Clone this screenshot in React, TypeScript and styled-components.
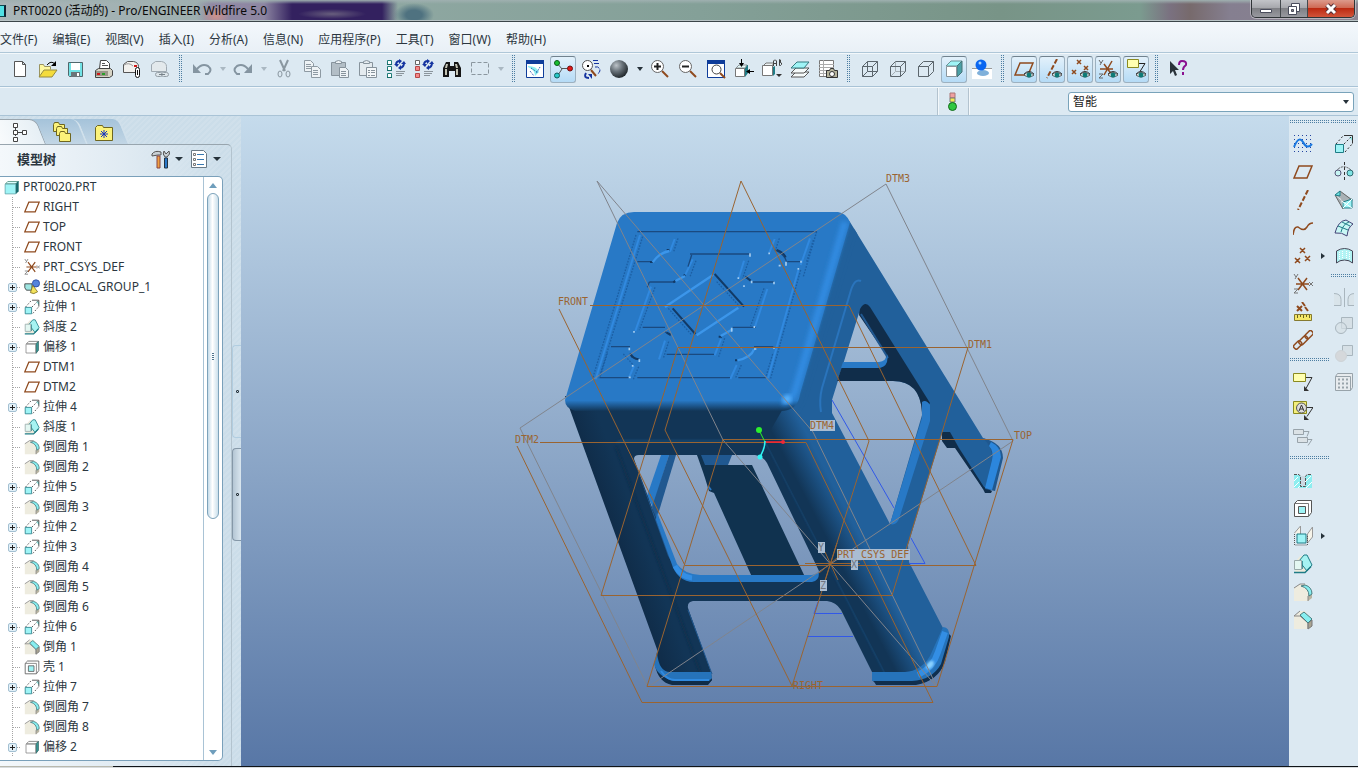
import React from 'react';
import styled, { createGlobalStyle, css } from 'styled-components';

const uiFont = '"Noto Sans", "Noto Sans CJK SC", sans-serif';

const GlobalStyle = createGlobalStyle`
  *, *::before, *::after { box-sizing: border-box; }
  body { margin: 0; background: #dbe8f1; font: 12px/20px ${uiFont}; color: #2b3640; }
  button { font: inherit; color: inherit; padding: 0; margin: 0; border: 0; background: none; }
  ul { list-style: none; margin: 0; padding: 0; }
`;

/* ---------- drawings ---------- */

const BROWN = '#8f4a1e';
const TEAL = '#1f7c86';
const AQUA = '#9ff4f6';

const eye = (
  <g>
    <path d="M10 16q4-5 10 0q-5 4-10 0z" fill="#fff" stroke="#555" />
    <circle cx="15" cy="16" r="2.5" fill="#0f7a78" />
    <path d="M10 15q5-5 10 0" fill="none" stroke="#333" />
  </g>
);

const cubeLines = 'M2.5 7.5h10v10h-10zM7.5 2.5h10v10M2.5 7.5l5-5M12.5 7.5l5-5M12.5 17.5l5-5';

const art: Record<string, React.ReactNode> = {
  new: <path d="M4.500 2.500h8l3 3v12h-11z M12.500 2.500v3h3" fill="#fff" stroke="#555" />,
  open: (
    <g>
      <path d="M1.500 17.500v-12h4l1 2h6v3" fill="#fdf8a0" stroke="#9a9460" />
      <path d="M1 18l5-7h13l-5 7z" fill="#f4dc3c" stroke="#958a40" />
      <path d="M9 6q4-5 8-1" fill="none" stroke="#000" />
      <path d="M18 2v5h-5z" fill="#000" />
    </g>
  ),
  save: (
    <g>
      <path d="M2.500 3.500h14v14h-13l-1-1z" fill="#72e3e6" stroke="#50676c" />
      <path d="M5 4h9v7H5z" fill="#fff" />
      <path d="M5 13h9v5H5z" fill="#6b7478" />
      <path d="M11 14h2v3h-2z" fill="#fff" />
    </g>
  ),
  print: (
    <g>
      <path d="M5.500 9.500l1-8h6l3 3v5z" fill="#fff" stroke="#444" />
      <path d="M8 4.500h3M8 6.500h6" stroke="#555" />
      <path d="M1.500 11.500l3-2h12l2 2v5l-3 2h-14z" fill="#d6d3c4" stroke="#444" />
      <path d="M2 12h12v5H2z" fill="#9a9788" />
      <path d="M3 14h3v2H3z" fill="#d01818" />
      <path d="M8 14h3v2H8z" fill="#28a028" />
    </g>
  ),
  mail: (
    <g>
      <path d="M1.500 13.500v-8l4-3h6q5 1 5 5v6z" fill="#f2f1ee" stroke="#555" />
      <path d="M2 6q5-3 9 1" fill="none" stroke="#999" />
      <path d="M12 6h3v2h-3z" fill="#d01818" />
      <rect x="13.500" y="8.500" width="4" height="10" rx="2" fill="#fff" stroke="#111" />
      <path d="M15.500 11v5" stroke="#111" />
    </g>
  ),
  maillink: (
    <g opacity=".9">
      <path d="M1.500 12.500v-7l4-3h6q5 1 5 5v5z" fill="#e4e9ec" stroke="#99a3aa" />
      <rect x="5.500" y="13.500" width="7" height="4" rx="2" fill="#dde5ea" stroke="#8d979e" />
      <rect x="11.500" y="13.500" width="7" height="4" rx="2" fill="#dde5ea" stroke="#8d979e" />
      <path d="M9 15.500h6" stroke="#6d777e" />
    </g>
  ),
  undo: <g fill="none" stroke="#8595a1" strokeWidth="2"><path d="M5 10q5-6 11-3q5 4 0 8h-3" /><path d="M1 5v9h8z" fill="#8595a1" stroke="none" /></g>,
  redo: <g fill="none" stroke="#8595a1" strokeWidth="2"><path d="M15 10q-5-6-11-3q-5 4 0 8h3" /><path d="M19 5v9h-8z" fill="#8595a1" stroke="none" /></g>,
  cut: (
    <g fill="none" stroke="#8a97a0" strokeWidth="2">
      <path d="M6 1l5 11M14 1L9 12" />
      <ellipse cx="6" cy="15" rx="2" ry="3" strokeWidth="1" />
      <ellipse cx="14" cy="15" rx="2" ry="3" strokeWidth="1" />
    </g>
  ),
  copy: (
    <g fill="#eef3f6" stroke="#8e9aa3">
      <path d="M2.500 1.500h6l3 3v8h-9z M4 5.500h5M4 7.500h5M4 9.500h5" />
      <path d="M9.500 7.500h6l3 3v8h-9z M11 11.500h5M11 13.500h5M11 15.500h5" />
    </g>
  ),
  paste: (
    <g fill="#b3bec6" stroke="#87939c">
      <path d="M1.500 3.500h14v13h-14z" /><path d="M5.500 4.500v-2l3-1l3 1v2z" fill="#eef3f6" />
      <path d="M9.500 8.500h6l3 3v7h-9z M11 12.500h5M11 14.500h5M11 16.500h5" fill="#eef3f6" />
    </g>
  ),
  pastex: (
    <g fill="#e4ebef" stroke="#87939c">
      <path d="M1.500 3.500h13v13h-13z" /><path d="M5.500 4.500v-2l3-1l3 1v2z" />
      <path d="M8.500 8.500h10v10h-10z M10 11.500h2M13 11.500h4M10 13.500h2M13 13.500h4M10 16.500h2M13 16.500h4" fill="#f3f7f9" />
    </g>
  ),
  regen: (
    <g>
      <path d="M1.500 1.500h4v4h-4zM1.500 7.500h4v4h-4zM1.500 14.500h4v4h-4z" fill="#fff" stroke="#1f7c78" />
      <path d="M1 5h5v1H1zM1 11h5v1H1zM1 18h5v1H1z" fill="#156c68" />
      <path d="M10 6q0-4 4-4M18 4q0 4-4 5" fill="none" stroke="#1534a0" strokeWidth="2" />
      <path d="M13 0v5l3-3zM15 6v5l-3-2zM8 5h5l-2 3zM15 5h5l-2-3z" fill="#1534a0" />
      <path d="M10 12.500h9M10 14.500h8M10 16.500h6" stroke="#8b959c" />
    </g>
  ),
  regenred: (
    <g>
      <path d="M1.500 1.500h4v4h-4z" fill="#fff" stroke="#666" />
      <path d="M1.500 7.500h4v4h-4zM1.500 14.500h4v4h-4z" fill="#f48888" stroke="#b84848" />
      <path d="M10 6q0-4 4-4M18 4q0 4-4 5" fill="none" stroke="#1534a0" strokeWidth="2" />
      <path d="M13 0v5l3-3zM15 6v5l-3-2zM8 5h5l-2 3zM15 5h5l-2-3z" fill="#1534a0" />
      <path d="M10 12.500h9M10 14.500h8M10 16.500h6" stroke="#8b959c" />
    </g>
  ),
  find: (
    <g>
      <path d="M4 3h4v4h4V3h4l3 6v9h-6v-6H7v6H1V9z" fill="#151515" />
      <path d="M4 5h2l-1 4H3zM13 5h2l1 4h-2zM3 10h2v6H3zM14 10h2v6h-2z" fill="#c4c4b4" />
    </g>
  ),
  marquee: <path d="M1.500 3.500h17v12h-17z" fill="none" stroke="#8b979f" strokeDasharray="4 2" />,
  repaint: (
    <g>
      <path d="M1.500 2.500h17v16h-17z" fill="#fff" stroke="#0f3d9a" /><path d="M1 1h18v4H1z" fill="#0f3d9a" />
      <path d="M3 7q9 0 11 6l-4 4q0-6-7-9z" fill="#8ff0f0" />
      <path d="M6 9l6 4M5 12l4 5M15 8l-4 7" stroke="#1446a8" strokeDasharray="1 1" />
    </g>
  ),
  axis3: (
    <g>
      <path d="M4 4l5 6l-4 6M9 9.500h9" fill="none" stroke="#555" />
      <circle cx="4" cy="4" r="2.500" fill="#18c030" stroke="#0b5a16" />
      <circle cx="17" cy="9.500" r="2.500" fill="#e01818" stroke="#701010" />
      <circle cx="4" cy="16.500" r="2.500" fill="#28c8c8" stroke="#0e5c5c" />
    </g>
  ),
  orient: (
    <g>
      <path d="M10 11l5 6" stroke={BROWN} strokeWidth="2" />
      <circle cx="6.500" cy="6.500" r="5" fill="#fff" stroke="#555" />
      <path d="M6 6h2v2H6z" />
      <path d="M12 1.500h6M13 4.500h5M14 8q4-1 5 3q0 3-3 4" fill="none" stroke="#1534a0" strokeDasharray="5 1" />
      <path d="M5 14q-3 5 3 5" fill="none" stroke="#1534a0" strokeWidth="2" />
      <path d="M7 15h4v5z" fill="#1534a0" />
    </g>
  ),
  ball: <circle cx="10" cy="10" r="9" fill="url(#sphere)" />,
  zoomin: (
    <g>
      <path d="M12 12l6 6" stroke={BROWN} strokeWidth="2" />
      <circle cx="7.500" cy="7.500" r="6" fill="#fff" stroke="#666" /><path d="M4 7.500h7M7.500 4v7" stroke="#222" strokeWidth="2" />
    </g>
  ),
  zoomout: (
    <g>
      <path d="M12 12l6 6" stroke={BROWN} strokeWidth="2" />
      <circle cx="7.500" cy="7.500" r="6" fill="#fff" stroke="#666" /><path d="M4 7.500h7" stroke="#222" strokeWidth="2" />
    </g>
  ),
  refit: (
    <g>
      <path d="M1.500 2.500h17v16h-17z" fill="#fff" stroke="#0f3d9a" /><path d="M1 1h18v4H1z" fill="#0f3d9a" />
      <path d="M14 14l5 5" stroke={BROWN} strokeWidth="2" /><circle cx="10.500" cy="10.500" r="4.500" fill="#fff" stroke="#444" />
    </g>
  ),
  reorient: (
    <g>
      <path d="M2 9l3-3h9v8l-3 4z" fill={TEAL} /><path d="M2 9l3-3h8l-2 3z" fill="#e7fbfb" stroke="#8a9498" /><path d="M1.500 9.500h9v8h-9z" fill="#fff" stroke="#777" />
      <path d="M7.500 0v5M20 12.500h-5" stroke="#000" /><path d="M5 4h5L7.500 8zM16 10v5l-4-2.500z" fill="#000" />
    </g>
  ),
  views: (
    <g>
      <path d="M1 7l3-3h8l-2 3z" fill="#eef4f5" stroke="#777" /><path d="M11 8l2-1v8l-2 2z" fill={TEAL} />
      <path d="M.5 6.500h10v10H.5z" fill="#fff" stroke="#777" />
      <path d="M11.500 7V2l1-1h1l1 1v5M12 4.500h2M17.500 .500v6h1l1-1V4l-1-.500h-1h1V1l-1-.500z" fill="none" stroke="#444" /><path d="M14 15h6l-3 3z" fill="#333" />
    </g>
  ),
  layers: (
    <g fill="#f5fafa" stroke="#555">
      <path d="M1 18l5-5h13l-5 5z" /><path d="M1 14l5-5h13l-5 5z" /><path d="M1 9l6-6h12l-5 6z" fill={AQUA} stroke="#357a80" />
    </g>
  ),
  viewmgr: (
    <g>
      <path d="M1.500 1.500h14v16h-14z" fill="#fff" stroke="#777" />
      <path d="M1 5.500h15M1 8.500h15M1 11.500h15M1 14.500h15M5.500 1v16" stroke="#aaa" />
      <path d="M8.500 11.500h3l1-2h3l1 2h3v7h-11z" fill="#b5b39b" stroke="#333" /><circle cx="14" cy="15" r="2.500" fill="#fff" stroke="#333" />
    </g>
  ),
  wire: <path d={cubeLines + 'M7.5 2.5v10h10M2.5 17.5l5-5'} fill="none" stroke="#5c666d" />,
  hidden: <g fill="none" stroke="#5c666d"><path d="M7.500 3v9.500h9.500M3 17l4-4" stroke="#a5afb5" /><path d={cubeLines} /></g>,
  nohidden: <path d={cubeLines} fill="none" stroke="#5c666d" />,
  shaded: (
    <g>
      <path d="M2 7l5-5h11l-5 5z" fill={AQUA} stroke="#6a9397" /><path d="M13 7l5-5v11l-5 5z" fill="#4aa0a6" stroke="#497377" />
      <path d="M2.500 7.500h10v10h-10z" fill="#fff" stroke="#8b969c" />
    </g>
  ),
  realism: (
    <g>
      <path d="M0 9h20v11H0z" fill="#fff" /><path d="M0 9.500h20" stroke="#999" />
      <ellipse cx="11" cy="14" rx="6" ry="3" fill="#7fb0da" /><circle cx="9" cy="6" r="5.500" fill="#0a66f0" /><circle cx="8" cy="4" r="1.500" fill="#a8d4ff" />
    </g>
  ),
  dplane: <g><path d="M1 16l5-12h13l-5 12z" fill="none" stroke={BROWN} strokeWidth="1.500" />{eye}</g>,
  daxis: <g><path d="M15 0L5 19" stroke={BROWN} strokeWidth="2" strokeDasharray="5 2" />{eye}</g>,
  dpoint: <g><path d="M7 1l4 4M11 1l-4 4M2 11l4 4M6 11l-4 4M14 7l4 4M18 7l-4 4" stroke={BROWN} strokeWidth="1.500" />{eye}</g>,
  dcsys: <g><path d="M2 10h13M6 5l8 11M14 2L6 16" stroke={BROWN} strokeWidth="1.500" /><path d="M1 1l2 3M5 1L2 6M1 15h4l-4 4h4" fill="none" stroke="#666" />{eye}</g>,
  dnote: <g><path d="M1.500 .500h11v8h-11z" fill="#ffffb0" stroke="#8a8a20" /><path d="M13 4.500h6l-5 8" fill="none" stroke="#222" />{eye}</g>,
  help: (
    <g>
      <path d="M2 2v13l3-3l2 5l2-1l-2-5h4z" fill="#2a333a" />
      <path d="M11 6q0-4 3-4q5 0 4 4q-3 2-3 5M15 13v3" fill="none" stroke="#8a1090" strokeWidth="2" />
    </g>
  ),
  light: (
    <g>
      <path d="M8 1h5v5H8z" fill="#f0a0a0" stroke="#a77" /><path d="M8 6h5v4H8z" fill="#f5ec50" stroke="#777" />
      <circle cx="10.500" cy="14.500" r="4" fill="#30c840" stroke="#146a1c" />
    </g>
  ),
  /* feature toolbars */
  sketch: (
    <g>
      <path d="M1 1.500h19M1 5.500h19M1 9.500h19M1 13.500h19M1 17.500h19" stroke="#2344a0" strokeDasharray="1 3" />
      <path d="M1 13q5-12 9-5q4 8 9 2" fill="none" stroke="#1878e0" strokeWidth="2" />
    </g>
  ),
  plane: <path d="M1 16l5-12h13l-5 12z" fill="none" stroke={BROWN} strokeWidth="1.500" />,
  axis: <path d="M15 0L5 20" stroke={BROWN} strokeWidth="2" strokeDasharray="5 2" />,
  curve: <path d="M0 17q1-9 5-8q6 5 9 0q2-4 6-4" fill="none" stroke={BROWN} strokeWidth="1.500" />,
  points: <path d="M7 2l5 5M12 2L7 7M2 12l5 5M7 12l-5 5M12 10l5 5M17 10l-5 5" stroke={BROWN} strokeWidth="1.500" />,
  csys: <g><path d="M3 10h13M5 4l9 12M14 4L5 16" stroke={BROWN} strokeWidth="1.500" /><path d="M1 0l2 3M5 0L2 5M1 15h4l-4 4h4M16 8l4 4M20 8l-4 4" fill="none" stroke="#777" /></g>,
  analysis: (
    <g>
      <path d="M4 4l5 5M9 4L4 9M9 0l3 4M12 5l3 4" stroke={BROWN} strokeWidth="2" />
      <path d="M1.500 12.500h17v6h-17z" fill="#f5e868" stroke="#857a30" /><path d="M4.500 13v3M7.500 13v2M10.500 13v3M13.500 13v2M16.500 13v3" stroke="#6b6220" />
    </g>
  ),
  chain: (
    <g fill="none" stroke={BROWN} strokeWidth="1.500">
      <rect x="0" y="13" width="9" height="5" rx="2" transform="rotate(-45 4 15)" />
      <rect x="5" y="8" width="10" height="5" rx="2" transform="rotate(-45 10 10)" />
      <rect x="11" y="2" width="9" height="5" rx="2" transform="rotate(-45 16 4)" />
    </g>
  ),
  note: <g><path d="M.5 1.500h12v8H.5z" fill="#ffffb0" stroke="#8a8a20" /><path d="M13 5.500h6l-6 11" fill="none" stroke="#333" /><path d="M11 14v5h5z" fill="#333" /></g>,
  annot: <g><path d="M.5 1.500h13v12H.5z" fill="#f3ee7c" stroke="#8a8a20" /><circle cx="8.500" cy="8" r="5" fill="#ddd" stroke="#555" /><path d="M6 11l2.500-6L11 11M7 9h3M14 7.500h6l-6 9" fill="none" stroke="#333" /><path d="M11 15v5h5z" fill="#333" /></g>,
  annot2: <g fill="#dbe2e6" stroke="#98a3aa"><path d="M.5 1.500h10v5H.5zM4.500 9.500h10v5h-10z" /><path d="M11 3.500h5l-2 5M15 11.500h4l-4 6" fill="none" /></g>,
  hole: <g><path d="M1 5h5l2 2v9h4V7l2-2h5v13H1z" fill="#8deef0" /><path d="M1 17l5-5M5 18l3-3M13 18l6-6M12 12l6-6M1 11l4-4" stroke="#fff" /><path d="M8 6h4v10H8z" fill="#cdd9e2" /><path d="M1 4.500h5l1.500 2v10h5v-10l1.500-2h4" fill="none" stroke="#555" strokeDasharray="3 1" /></g>,
  shell: <g><path d="M1.500 5.500l3-3h14v12l-3 4h-14z" fill="#fff" stroke="#555" /><path d="M1.500 5.500h14v13" fill="none" stroke="#777" /><path d="M5.500 8.500h7v7h-7z" fill={AQUA} stroke="#555" /></g>,
  rib: <g><path d="M1.500 7l6-7v9M14.500 8l5-7v10l-5 6z" fill="#f6f4ea" stroke="#999" /><path d="M4 8h9v9H4z" fill={AQUA} stroke={TEAL} /><path d="M1.500 8v11h13V9" fill="none" stroke="#555" strokeDasharray="1 1" /></g>,
  draft: <g><path d="M2 8l5-6h5l6 11-5 5H2z" fill="#eceadc" /><path d="M6 7l5-6h3l5 10l-5 6z" fill="#a6f3f2" stroke={TEAL} /><path d="M1 18.500h11l6-6M9 7v8" fill="none" stroke={TEAL} strokeWidth="1.500" /><path d="M1.500 6.500h7v9h-7z" fill="#e3f7f2" stroke="#9aa" /></g>,
  round: <g><path d="M1 6l6-4h6l6 8v6l-4 3H1z" fill="#eeecdf" /><path d="M15 19v-6l4-3v6z" fill="#b8b4a2" /><path d="M1 6l6-4h5" fill="none" stroke="#888" /><path d="M8 4l4-1q7 2 7 9l-3 2q0-8-8-10z" fill="#86eef0" stroke="#4a7c80" /><path d="M15 14v5" stroke="#888" /></g>,
  chamfer: <g><path d="M1 6l6-5h5l7 9v6l-4 3H1z" fill="#eeecdf" /><path d="M15 19v-6l4-3v6z" fill="#a9a491" stroke="#777" /><path d="M1 6l6-5M1 6h6l8 7v6" fill="none" stroke="#888" /><path d="M7 5l4-3l8 7l-4 4z" fill="#86eef0" stroke="#4a7c80" /></g>,
  extrude: <g><path d="M15 3h4v5z" fill="#8fe5e0" /><path d="M2 10l7-8M10 10l8-8M11 18l8-9" stroke="#333" strokeDasharray="2 2" /><path d="M10 1.500h8.500v8" fill="none" stroke="#333" /><path d="M1.500 10.500h8v8h-8z" fill={AQUA} stroke={TEAL} /></g>,
  revolve: <g><path d="M10.500 0v20" stroke="#333" strokeDasharray="3 2" /><path d="M2 9q8-9 17 1" fill="none" stroke="#555" strokeDasharray="2 1" /><circle cx="4" cy="11" r="3" fill="#c7f5f4" stroke="#557" /><circle cx="16" cy="11" r="3" fill="#7fe4e4" stroke="#2f6a70" /></g>,
  blend: <g><path d="M1 5l5-4l13 9-10 9z" fill="#a9b1b5" /><path d="M1 5l6 4l2 10 3-5z" fill="#fff" /><path d="M1 5l8 14M6 1l12 9" stroke="#666" /><path d="M9 12l9-3v9H9z" fill={AQUA} stroke={TEAL} /><path d="M9 12l9 6M18 9l-9 9" stroke="#fff" /><path d="M1 5l5-4v5z" fill="#6ee0e0" stroke={TEAL} /></g>,
  sweep: <g><path d="M1 15q3-12 11-13l7 4q-5 3-6 12q-5-4-12-3z" fill="#c9f7f5" stroke="#447" /><path d="M4 8l10 4M8 4l8 4M7 14q2-8 8-10" fill="none" stroke={TEAL} /></g>,
  boundary: <g><path d="M2.500 17V5q8-5 16 0v12q-3-3-8-3q-5 0-8 3z" fill="#b2f4f4" stroke="#445" /><path d="M5.500 6v7M8.500 5v7M12.500 5v7M15.500 6v7" stroke="#fff" strokeDasharray="1 1" /></g>,
  mirror: <g fill="#d9e4ea" stroke="#a9b6be"><path d="M0 5.500q7 0 7 6v6H0M21 5.500q-7 0-7 6v6h7" /><path d="M10.500 0v19" /></g>,
  merge: <g fill="#d6e0e6" stroke="#a9b6be"><path d="M7.500 1.500h11v11h-11z" /><circle cx="7" cy="12" r="5.500" fillOpacity=".7" /></g>,
  trim: <g fill="#d6e0e6" stroke="#a9b6be"><path d="M8.500 1.500h10v10h-10z" /><circle cx="7" cy="12" r="5.500" fill="#d5d8db" stroke="#cdd3d7" /></g>,
  pattern: <g><path d="M1.500 4.500l2-3h15v14l-2 3h-15z" fill="#e7ebee" stroke="#98a3aa" /><path d="M1.500 4.500h15v14" fill="none" stroke="#98a3aa" /><path d="M4 7.500h12M4 11.500h12M4 15.500h12" stroke="#98a3aa" strokeWidth="2" strokeDasharray="2 2" /></g>,
  /* tree */
  part: <g><path d="M2 5l3-3h14l-3 3z" fill="#dff" stroke="#487" /><path d="M16 5l3-3v13l-3 3z" fill="#17696e" stroke="#166" /><path d="M1.500 5.500h14v13h-14z" fill={AQUA} stroke="#5b9fa4" /></g>,
  group: <g><path d="M1 6h9v8H3l-2-3z" fill="#9fe6e2" stroke="#333" /><circle cx="15" cy="5.500" r="4.500" fill="#5584dd" stroke="#2545a0" /><path d="M11 8l6 8q-5 4-9 1z" fill="#f3e25c" stroke="#776a20" /></g>,
  offset: <g><path d="M3 6l3-3h12l-3 3z" fill="#fff" stroke="#777" /><path d="M15 6l3-3v11l-3 4z" fill="#3a9a96" stroke="#366" /><path d="M2.500 6.500h12v11h-12z" fill="#fff" stroke="#888" /></g>,
  /* navigator */
  treetab: <g fill="#fff" stroke="#444"><path d="M5.500 6v8M8 10.500h8" /><path d="M3.500 1.500h4v4h-4zM3.500 8.500h4v4h-4zM3.500 15.500h4v4h-4zM12.500 8.500h4v4h-4z" /></g>,
  folders: <g fill="#fbf27a" stroke="#6e6620"><path d="M1.500 2.500l1-2h4l1 2h5v7h-11z" /><path d="M4.500 6.500l1-2h4l1 2h5v7h-11z" /><path d="M7.500 11.500l1-2h4l1 2h5v8h-11z" /></g>,
  favs: <g><path d="M1.500 5.500l2-2h5l1 2h9v13h-17z" fill="#fbf27a" stroke="#6e6620" /><path d="M10 8v8M6 12h8M7 9l6 6M13 9l-6 6" stroke="#1534c0" /></g>,
  tools: (
    <g>
      <path d="M1 5q3-4 9-2v3H7L1 7zM13 2l2 3l3-3q2 3-2 6h-2q-3-3-1-6z" fill="#c8cfd3" stroke="#555" />
      <path d="M6 7h3v12H6z" fill="#f0a040" stroke="#844" /><path d="M13.500 9h3v10h-3z" fill="#2b78c8" stroke="#234" />
    </g>
  ),
  settings: (
    <g>
      <path d="M2.500 1.500h12l3 3v14h-15z" fill="#fff" stroke="#6a7a86" />
      <path d="M8 5.500h7M8 10.500h7M8 15.500h7" stroke="#3878b0" /><path d="M4.500 4.500h2v2h-2zM4.500 9.500h2v2h-2zM4.500 14.500h2v2h-2z" fill="none" stroke="#777" />
    </g>
  ),
};

function Icon({ name, size = 20 }: { name: string; size?: number }) {
  return (
    <svg width={size} height={size} viewBox="0 0 20 20" aria-hidden="true">
      {name === 'ball' && (
        <defs>
          <radialGradient id="sphere" cx=".35" cy=".3" r=".75">
            <stop offset="0" stopColor="#bcc3c8" /><stop offset=".45" stopColor="#69737a" /><stop offset="1" stopColor="#1c2226" />
          </radialGradient>
        </defs>
      )}
      {art[name]}
    </svg>
  );
}

/* ---------- window frame ---------- */

const Shell = styled.div`
  min-height: 100vh;
  display: flex;
  flex-direction: column;
  overflow: hidden;
`;

const TitleBar = styled.header`
  height: 22px;
  flex: none;
  display: flex;
  align-items: flex-start;
  justify-content: space-between;
  padding-right: 3px;
  border-bottom: 1px solid #3c464a;
  box-shadow: inset 0 -1px 0 #b9c4c6;
  color: #0a0a0a;
  background:
    linear-gradient(#9fb0b0, rgba(142, 167, 161, 0) 4px),
    radial-gradient(ellipse 20px 12px at 414px 15px, #4f7280 40%, transparent 100%),
    radial-gradient(ellipse 14px 10px at 216px 16px, #c9908e 10%, transparent 100%),
    radial-gradient(ellipse 34px 5px at 332px 14px, rgba(130, 125, 140, 0.6) 10%, transparent 100%),
    linear-gradient(90deg, transparent 196px, #9189a4 212px, #8d86a2 264px, #33215f 292px, #33215f 382px, transparent 398px),
    linear-gradient(90deg, #a9b5b8 0, #9fb0b0 180px, #8ea7a1 400px, #84a098 700px, #789487 1000px, #7b9b8f 1140px, #7a7180 1170px, #776a6c 1190px, #857f90 1230px, #8a8390 1358px);
`;

const Caption = styled.h1`
  margin: 0;
  font: 12px/21px ${uiFont};
  display: flex;
  align-items: center;
  gap: 7px;
`;

const AppMark = styled.span`
  width: 6px;
  height: 12px;
  background: #50e0e4;
  border: 1px solid #0a4a50;
  border-left: 0;
  border-right: 2px solid #123;
`;

const WindowButtons = styled.div`
  display: flex;
  height: 18px;
  border: 1px solid #2f3437;
  border-top: 0;
  border-radius: 0 0 5px 5px;
  overflow: hidden;
  box-shadow: 0 0 0 1px rgba(255, 255, 255, 0.4);
`;

const WindowButton = styled.button<{ $w: number; $close?: boolean }>`
  width: ${(p) => p.$w}px;
  display: grid;
  place-items: center;
  border-left: 1px solid #44494d;
  background: ${(p) =>
    p.$close
      ? 'linear-gradient(#dc9a8c 0, #cf6a55 45%, #bc2a12 50%, #d2543a 100%)'
      : 'linear-gradient(#c2c4c8 0, #a7a8ad 45%, #7f8085 50%, #98999f 100%)'};
  &:first-child { border-left: 0; }
`;

const MenuBar = styled.nav`
  flex: none;
  height: 31px;
  display: flex;
  align-items: center;
  gap: 15px;
  padding-top: 6px;
  background: linear-gradient(#f3f8fc, #e9f0f6);
  border-bottom: 1px solid #afc7d8;
  white-space: nowrap;
`;

const MenuItem = styled.button`
  line-height: 20px;
`;

const toolbarBase = css`
  flex: none;
  display: flex;
  background: #dce9f2;
  border-top: 1px solid #f3f8fb;
  border-bottom: 1px solid #a9c3d6;
`;

const Toolbar = styled.div`
  ${toolbarBase}
  height: 34px;
  padding-left: 6px;
  padding-bottom: 2px;
  align-items: center;
`;

const FilterBar = styled.div`
  ${toolbarBase}
  height: 29px;
  padding-right: 4px;
  align-items: stretch;
  justify-content: flex-end;
`;

const dots = css`
  background-image: conic-gradient(at 1px 1px, transparent 75%, #4d7ea2 0);
  background-size: 2px 2px;
`;

const Grip = styled.span`
  width: 4px;
  height: 28px;
  margin: 0 5px;
  ${dots}
`;

const ToolButton = styled.button<{ $on?: boolean }>`
  width: 26px;
  height: 27px;
  margin: 0 1px;
  flex: none;
  display: grid;
  place-items: center;
  border-radius: 3px;
  ${(p) =>
    p.$on &&
    css`
      border: 1px solid #9db1c0;
      border-top-color: #71828e;
      background: linear-gradient(#e3f1fb, #b5dbf6);
    `}
`;

const DropArrow = styled.button<{ $off?: boolean }>`
  width: 13px;
  height: 20px;
  display: grid;
  place-items: center;
  &::after {
    content: '';
    border: 3px solid transparent;
    border-top: 4px solid ${(p) => (p.$off ? '#aab8c2' : '#26323a')};
    border-bottom: 0;
  }
`;

const HeadArrow = styled(DropArrow)`
  &::after { border-width: 4px 4px 0; }
`;

const LightCell = styled.div`
  width: 32px;
  margin-right: 99px;
  padding-right: 2px;
  display: grid;
  place-items: center;
  border-left: 1px solid #b3c3cf;
  border-right: 1px solid #b3c3cf;
  box-shadow: 1px 0 0 #f3f8fb, inset 1px 0 0 #f3f8fb;
`;

const FilterBox = styled.label`
  width: 286px;
  height: 20px;
  margin-top: 4px;
  display: grid;
  align-items: center;
  &::after {
    content: '';
    grid-area: 1 / 1;
    justify-self: end;
    margin-right: 5px;
    border: 3px solid transparent;
    border-top: 4px solid #26323a;
    border-bottom: 0;
    pointer-events: none;
  }
`;

const FilterSelect = styled.select`
  grid-area: 1 / 1;
  height: 20px;
  appearance: none;
  padding: 0 4px;
  border: 1px solid #79a3ba;
  border-radius: 3px;
  background: #fff;
  color: #222;
  font: 12px/18px ${uiFont};
`;

/* ---------- navigator ---------- */

const Body = styled.div`
  flex: 1;
  display: grid;
  grid-template-columns: 241px minmax(0, 1fr) 69px;
`;

const Navigator = styled.aside`
  display: grid;
  grid-template-columns: 232px 9px;
  background: repeating-linear-gradient(135deg, #d0e0eb 0 2px, #cbdde9 2px 4px);
`;

const NavMain = styled.div`
  display: flex;
  flex-direction: column;
`;

const Tabs = styled.div`
  height: 28px;
  padding-top: 3px;
  display: flex;
  overflow: hidden;
`;

const Tab = styled.button<{ $active?: boolean; $z: number }>`
  position: relative;
  z-index: ${(p) => p.$z};
  isolation: isolate;
  width: 46px;
  height: 25px;
  margin-right: -4px;
  padding-right: 6px;
  display: grid;
  place-items: center;
  &::before {
    content: '';
    position: absolute;
    inset: 0 0 0 -16px;
    z-index: -1;
    border-radius: 0 7px 0 0;
    transform: skewX(22deg);
    transform-origin: bottom right;
    ${(p) =>
      p.$active
        ? 'background: linear-gradient(90deg, #fff, #e6eff5); border: 1px solid #9aa5ad; border-bottom: 0;'
        : 'background: linear-gradient(#a5c3da, #c2d6e5); border-right: 2px solid #d0e0eb;'}
  }
`;

const Panel = styled.section`
  flex: 1;
  display: flex;
  flex-direction: column;
  padding: 0 8px 5px 0;
  border-top: 1px solid #98a5ae;
  border-right: 1px solid #b3c3ce;
  border-top-right-radius: 5px;
  background: linear-gradient(90deg, #f4f8fb 0, #dfeaf2 130px, transparent 220px);
`;

const PanelHead = styled.div`
  height: 31px;
  display: flex;
  align-items: center;
  padding: 0 0 3px 17px;
`;

const PanelTitle = styled.h2`
  margin: 0;
  flex: 1;
  font: bold 13px/20px ${uiFont};
`;

const HeadTool = styled.div`
  display: flex;
  align-items: center;
  margin-left: 4px;
  > button:first-child { height: 20px; margin-right: 1px; }
`;

const TreeBox = styled.div`
  flex: 1;
  display: grid;
  grid-template-columns: minmax(0, 1fr) 19px;
  border: 1px solid #7aa0ba;
  border-left: 0;
  border-radius: 0 5px 5px 0;
  background: #fff;
`;

const Row = styled.li<{ $root?: boolean }>`
  height: 20px;
  display: flex;
  align-items: center;
  gap: ${(p) => (p.$root ? 4 : 3)}px;
  padding-left: ${(p) => (p.$root ? 4 : 0)}px;
  white-space: nowrap;
`;

const Branch = styled.span`
  width: 21px;
  height: 20px;
  display: flex;
  align-items: center;
  padding-left: 8px;
  background:
    repeating-linear-gradient(#a5a5a5 0 1px, transparent 1px 2px) 12px 0 / 1px 20px no-repeat,
    repeating-linear-gradient(90deg, #a5a5a5 0 1px, transparent 1px 2px) 13px 10px / 10px 1px no-repeat;
`;

const Expander = styled.button`
  width: 9px;
  height: 9px;
  border: 1px solid #a3c0d2;
  border-radius: 2px;
  background:
    linear-gradient(#222, #222) 1px 3px / 5px 1px no-repeat,
    linear-gradient(#222, #222) 3px 1px / 1px 5px no-repeat,
    #e2f0f8;
`;

const ScrollBar = styled.div`
  display: flex;
  flex-direction: column;
  align-items: center;
  border-left: 1px solid #a9c3d5;
`;

const ScrollArrow = styled.button<{ $down?: boolean }>`
  width: 18px;
  height: 16px;
  display: grid;
  place-items: center;
  &::after {
    content: '';
    border: 4px solid transparent;
    ${(p) => (p.$down ? 'border-top: 5px solid #6f9ebc; border-bottom: 0;' : 'border-bottom: 5px solid #6f9ebc; border-top: 0;')}
  }
`;

const ScrollTrack = styled.div`
  flex: 1;
`;

const ScrollThumb = styled.div`
  width: 12px;
  height: 56%;
  border: 1px solid #7da3bb;
  border-radius: 6px;
  display: grid;
  place-items: center;
  background: linear-gradient(90deg, #c6dcea, #fff 45%, #cadfeb);
  &::after { content: ''; width: 2px; height: 7px; background: repeating-linear-gradient(#4d738c 0 1px, transparent 1px 2px); }
`;

const Rail = styled.div`
  display: flex;
  flex-direction: column;
  justify-content: center;
  gap: 10px;
  padding-top: 4px;
`;

const RailHandle = styled.button<{ $dark?: boolean }>`
  height: 93px;
  display: grid;
  place-items: center;
  border: 1px solid ${(p) => (p.$dark ? '#8598a8' : '#b1cde0')};
  border-right: 0;
  border-radius: 4px 0 0 4px;
  background: ${(p) => (p.$dark ? 'linear-gradient(90deg, #b4c6d4, #d9e6ef)' : 'transparent')};
  &::after { content: ''; width: 3px; height: 3px; border: 1px solid #26323a; border-radius: 1px; }
`;

/* ---------- canvas and feature toolbars ---------- */

const Viewport = styled.main`
  position: relative;
  background: linear-gradient(#c5dbec, #5877a6);
  > svg { position: absolute; inset: 0; width: 100%; height: 100%; }
`;

const FeatureBar = styled.aside`
  display: grid;
  grid-template-columns: 41px 28px;
  align-items: start;
  background: #dce9f2;
`;

const FeatureColumn = styled.div`
  display: flex;
  flex-direction: column;
`;

const FeatureGrip = styled.span`
  height: 4px;
  margin: 4px 1px 6px;
  ${dots}
`;

const FeatureRow = styled.div`
  display: flex;
  align-items: center;
  height: 28px;
`;

const Flyout = styled.button`
  width: 12px;
  height: 20px;
  display: grid;
  place-items: center;
  &::after { content: ''; border: 3px solid transparent; border-left: 4px solid #26323a; border-right: 0; }
`;

const StatusEdge = styled.footer`
  flex: none;
  height: 2px;
  background: linear-gradient(90deg, #b9b9ae 0 113px, #101418 113px) 0 0 / 100% 1px no-repeat, #d8dcde;
`;

/* ---------- the model ---------- */

const ORANGE = '#9a6431';
const GREY = '#80848c';

function Stool() {
  return (
    <svg viewBox="241 116 1048 650" role="img" aria-label="PRT0020">
      <defs>
        <linearGradient id="leg" gradientUnits="userSpaceOnUse" x1="826" y1="537" x2="853" y2="523">
          <stop offset="0" stopColor="#123556" /><stop offset="1" stopColor="#21609b" />
        </linearGradient>
        <linearGradient id="lip" gradientUnits="userSpaceOnUse" x1="0" y1="396" x2="0" y2="411">
          <stop offset="0" stopColor="#2879c6" /><stop offset=".3" stopColor="#2879c6" /><stop offset="1" stopColor="#123556" />
        </linearGradient>
        <linearGradient id="leftleg" gradientUnits="userSpaceOnUse" x1="604" y1="500" x2="626" y2="492">
          <stop offset="0" stopColor="#102d4a" /><stop offset="1" stopColor="#123556" />
        </linearGradient>
        <filter id="soft" x="-20%" y="-20%" width="140%" height="140%"><feGaussianBlur stdDeviation="2" /></filter>
        <filter id="soft1" x="-20%" y="-20%" width="140%" height="140%"><feGaussianBlur stdDeviation="1" /></filter>
        <clipPath id="body"><path d="M565 400L617 223Q621 212 634 212H838Q846 213 850 222L983 438L850 700H650Z" /></clipPath>
      </defs>

      {/* back legs seen through the front opening */}
      <path d="M661 455h8l-16 52-6-11z" fill="#2879c6" />
      <path d="M669 455h7l-20 66-4-14z" fill="#205890" />
      <path d="M697 455h35l-4 10h-24z" fill="#205890" />
      <path d="M697 455h4l4 10h47l53 112h-53L714 493l-5-2-4-13-2-6z" fill="#10324f" />
      <path d="M708 486l3 4" stroke="#2879c6" strokeWidth="2" />

      {/* front face */}
      <path
        fillRule="evenodd"
        fill="url(#leftleg)"
        d="M565 396L658 652 655 664Q656 672 664 680L671 684H708L712 680 711 672 688 608Q687 602 693 601H827Q836 602 841 610L872 672V680L876 684H916Q934 682 941 668L860 480 788 400ZM634 459Q634 455 639 455H755Q763 456 767 463L819 571Q818 577 812 577H694Q679 576 673 564Z"
      />
      <path d="M617 443Q618 441 624 441H758Q765 441 770 449L886 674" fill="none" stroke="#194875" strokeWidth="2" filter="url(#soft1)" />
      <path d="M616 447L700 672" stroke="#102e4b" strokeWidth="2" fill="none" filter="url(#soft1)" />
      <path d="M634 461L671 559 676 569 680 576 668 556Z" fill="#205890" />
      <path d="M656 520L671 562Q677 582 694 582H812Q819 581 819 573L812 575H700Q684 574 677 564L657 512Z" fill="#2879c6" />
      <path d="M675 566Q681 577 692 578" fill="none" stroke="#338ee4" strokeWidth="5" />
      <path d="M688 610l24 64" stroke="#205890" />

      {/* right side face */}
      <path
        fillRule="evenodd"
        fill="url(#leg)"
        d="M788 400L846 218 850 222 983 438 998 446 1001 455 993 490 983 489 949 432 942 433 908 545 909 562 943 628 946 650 935 668 918 676 885 672 765 440ZM859 313L886 354Q886 368 878 368H842L837 381H893Q922 381 922 415L890 524 832 413V400Z"
      />
      <path d="M860 309Q865 300 870 307L930 403 922 412Q920 381 893 381H837L842 367H877Q886 366 887 356L859 315Z" fill="#102d4a" />
      <path d="M861 314L888 358" stroke="#205890" fill="none" strokeWidth="2" />
      <path d="M843 362H879Q886 361 888 354L887 362Q885 368 877 368H841Z" fill="#2879c6" />
      <path d="M922 402Q926 399 930 405V421L899 519Q896 526 890 524L922 418Z" fill="#2879c6" />
      <path d="M942 432h8l9 16h-12l-5-7z" fill="#102d4a" />
      <path d="M955 448L983 489l2 4h6l1-2-8-4-25-39z" fill="#102d4a" />
      <path d="M983 438Q1003 443 1003 458L995 491 985 489 992 459Q993 448 983 438Z" fill="#1f5890" />
      <path d="M991 442Q1001 447 1001 457L992 490 985 488 992 460Q994 451 989 446Z" fill="#2c86dc" />
      <path d="M861 281Q855 278 851 290L822 388Q819 400 821 412" fill="none" stroke="#2a74bc" strokeWidth="2" />

      {/* feet */}
      <path d="M657 652L655 665Q658 682 672 685H708L712 680 708 676H672Q661 672 658 652Z" fill="#0f2c48" />
      <path d="M657 653Q659 672 670 672H711L712 678 709 681H673Q657 676 654 664Z" fill="#2673ba" />
      <path d="M661 671Q667 680 675 680H709" fill="none" stroke="#2f8ae0" strokeWidth="2" />
      <path d="M872 676L876 685H916Q938 681 945 662L951 636 947 632 938 662Q930 676 908 680Z" fill="#102f4e" />
      <path d="M872 672H905Q921 671 930 656L943 627Q950 627 949 637L941 664Q932 680 912 681H872Z" fill="#2673ba" />
      <path d="M918 675Q933 668 938 652L945 632" fill="none" stroke="#338ee4" strokeWidth="6" />
      <ellipse cx="930" cy="665" rx="3" ry="5" fill="#8ad2ff" transform="rotate(40 930 665)" filter="url(#soft1)" />

      {/* seat */}
      <path d="M565 400L617 223Q621 212 634 212H838Q846 213 850 222L800 394Q798 411 780 411H575Q565 408 565 400Z" fill="url(#lip)" />
      <g clipPath="url(#body)">
        <path d="M845 222L796 388Q793 400 782 402" fill="none" stroke="#318be1" strokeWidth="7" filter="url(#soft)" />
        <ellipse cx="787" cy="399" rx="4" ry="4" fill="#5ab4ff" filter="url(#soft)" />
        <path d="M850 214Q856 218 856 234L805 402 798 414" fill="none" stroke="#21609b" strokeWidth="3" />
      </g>

      {/* relief cut into the seat */}
      <g transform="translate(550 170) scale(.33333)" fill="none">
        <path
          stroke="#1c5fa4"
          strokeWidth="4"
          d="M278 200L147 625M790 210L770 275M752 300L662 625M258 195L128 625M384 205L370 248M688 205L674 248M438 272L420 320M596 272L578 325M315 352L268 480M642 355L602 468M356 515L340 565M524 505L506 560M266 590L250 628M574 585L556 625M800 185L760 320M172 550L150 622M355 415L425 495M500 335L565 405M220 552L250 585M668 552L648 620"
          strokeDasharray="5 4"
        />
        <path stroke="#3189df" strokeWidth="6" d="M270 195L137 628M780 205L752 285M745 300L654 625M374 207L360 245M674 207L658 248M428 268L406 314M582 272L566 325M303 350L256 483M652 357L614 472M345 512L327 568M513 507L494 556M252 588L236 625M560 585L541 627" />
        <path
          stroke="#1a4a80"
          strokeWidth="4"
          d="M262 185H800M262 275H305M712 275H752M420 252H602M298 336H376M605 336H672M278 472H345M548 472H618M183 530H240M612 530H674M350 553H492M150 623H240M262 623H540M565 623H648M425 255L414 290M298 336L292 352M676 240Q706 255 710 277M345 485L362 497M240 550L246 562"
        />
        <path stroke="#123a66" strokeWidth="6" d="M494 312L582 410M368 415L436 492M350 240h8M300 276h10M370 337l8-6M400 318l6-3M555 571h8M506 500h10M680 240Q700 246 707 262M586 320L602 332M242 552Q248 566 266 568M350 488L362 494" />
        <path stroke="#3c96ea" strokeWidth="7" d="M345 411L490 314M440 496L565 413M308 277Q328 248 358 243M376 333L405 318M512 498L548 478M562 571Q604 562 612 538" />
        <path stroke="#a5cdf0" strokeWidth="5" d="M600 250v10M672 335v8M655 250h5M686 287h6M708 275v12M252 483v5M613 468v6M545 473v12M268 568v8M582 346v5M605 332v8M612 537h7M672 530v6M238 533v8M248 585v5M753 272v6M745 294v5M236 622h6M565 322v5" />
      </g>

      {/* sketch curves */}
      <path d="M832 400L894 508M911 538L925 563.500H909M818 602L814 613.500H842M807 636.500H853" fill="none" stroke="#3158e8" />

      {/* datum planes */}
      <g fill="none" stroke={GREY}>
        <path d="M886 184L1013 441 648 687 520 428Z" />
        <path d="M597 181L813 432 937 687 723 440Z" />
      </g>
      <g fill="none" stroke={ORANGE}>
        <path d="M741 181L869 441 792 686 665 430Z" />
        <path d="M590 305.500H849L976 565.500H685L559 309" />
        <path d="M678 347.500H968L892 595.500H601Z" />
        <path d="M723 439.500H1013L937 686.500H647Z" />
        <path d="M540 442.500H806L933 702.500H642L517 446" />
        <path d="M805 563.500H860M837 543L822 590M825 552L838 580M819 573L843 553" />
      </g>

      {/* label plates */}
      <g fill="#aabdd2">
        <path d="M810 420h25v11h-25zM837 549h73v11h-73zM818 542h7v11h-7zM851 559h7v11h-7zM820 580h7v11h-7z" />
      </g>
      <g fill={ORANGE} fontFamily='"DejaVu Sans Mono", monospace' fontSize="10">
        <text x="886" y="182">DTM3</text>
        <text x="558" y="305">FRONT</text>
        <text x="968" y="348">DTM1</text>
        <text x="515" y="443">DTM2</text>
        <text x="810" y="429">DTM4</text>
        <text x="1014" y="439">TOP</text>
        <text x="793" y="689">RIGHT</text>
        <text x="837" y="558">PRT_CSYS_DEF</text>
        <g fill="#6f7580">
          <text x="818" y="551">Y</text>
          <text x="851" y="568">X</text>
          <text x="820" y="589">Z</text>
        </g>
      </g>

      {/* spin centre */}
      <g fill="none">
        <path d="M759 430L765 442" stroke="#2df02d" />
        <path d="M765 442H783" stroke="#ff2030" strokeWidth="1.500" />
        <path d="M765 441Q765 448 760 457" stroke="#30f4f4" strokeWidth="1.500" />
        <circle cx="759" cy="430" r="3" fill="#2df02d" />
        <circle cx="783" cy="442" r="2" fill="#f02838" />
        <circle cx="760" cy="457" r="2.500" fill="#30f4f4" />
      </g>
    </svg>
  );
}

/* ---------- data ---------- */

const menus = ['文件(F)', '编辑(E)', '视图(V)', '插入(I)', '分析(A)', '信息(N)', '应用程序(P)', '工具(T)', '窗口(W)', '帮助(H)'];

/* "|" is a grip, "v" an arrow, "-v" a disabled arrow, "+" marks a pressed button */
const toolbar =
  'new open save print mail maillink | undo -v redo -v cut copy paste pastex regen regenred find marquee -v | repaint +axis3 orient ball v zoomin zoomout refit reorient views layers viewmgr | wire hidden nohidden +shaded realism | +dplane +daxis +dpoint +dcsys +dnote | help'.split(' ');

const tree: [string, string, boolean?][] = [
  ['plane', 'RIGHT'], ['plane', 'TOP'], ['plane', 'FRONT'], ['csys', 'PRT_CSYS_DEF'],
  ['group', '组LOCAL_GROUP_1', true], ['extrude', '拉伸 1', true], ['draft', '斜度 2'], ['offset', '偏移 1', true],
  ['plane', 'DTM1'], ['plane', 'DTM2'], ['extrude', '拉伸 4', true], ['draft', '斜度 1'],
  ['round', '倒圆角 1'], ['round', '倒圆角 2'], ['extrude', '拉伸 5', true], ['round', '倒圆角 3'],
  ['extrude', '拉伸 2', true], ['extrude', '拉伸 3', true], ['round', '倒圆角 4'], ['round', '倒圆角 5'],
  ['round', '倒圆角 6'], ['extrude', '拉伸 6', true], ['chamfer', '倒角 1'], ['shell', '壳 1'],
  ['extrude', '拉伸 7', true], ['round', '倒圆角 7'], ['round', '倒圆角 8'], ['offset', '偏移 2', true],
];

const datumColumn = '| sketch plane axis curve points> csys analysis chain | note annot annot2 | hole shell rib> draft round chamfer'.split(' ');
const shapeColumn = '| extrude revolve blend sweep boundary | mirror merge trim pattern'.split(' ');

function FeatureTools({ items }: { items: string[] }) {
  return (
    <FeatureColumn>
      {items.map((item, i) => {
        if (item === '|') return <FeatureGrip key={i} />;
        const name = item.replace('>', '');
        return (
          <FeatureRow key={i}>
            <ToolButton type="button" aria-label={name}><Icon name={name} /></ToolButton>
            {item.endsWith('>') && <Flyout type="button" aria-label={name + ' options'} />}
          </FeatureRow>
        );
      })}
    </FeatureColumn>
  );
}

export default function App() {
  return (
    <Shell>
      <GlobalStyle />
      <TitleBar>
        <Caption><AppMark />PRT0020 (活动的) - Pro/ENGINEER Wildfire 5.0</Caption>
        <WindowButtons>
          <WindowButton $w={28} type="button" aria-label="Minimize">
            <svg width="14" height="12"><path d="M1.500 6.500h11v3h-11z" fill="#fff" stroke="#4a4d5c" /></svg>
          </WindowButton>
          <WindowButton $w={27} type="button" aria-label="Restore">
            <svg width="14" height="14">
              <path d="M4.500 1.500h8v8h-8z" fill="#fff" stroke="#4a4d5c" />
              <path d="M1.500 4.500h8v8h-8z" fill="#fff" stroke="#4a4d5c" /><path d="M4.500 7.500h2v2h-2z" fill="#888" stroke="#4a4d5c" />
            </svg>
          </WindowButton>
          <WindowButton $w={47} $close type="button" aria-label="Close">
            <svg width="14" height="12">
              <path d="M3 2l8 8M11 2l-8 8" stroke="#553038" strokeWidth="5" /><path d="M3 2l8 8M11 2l-8 8" stroke="#fff" strokeWidth="3" />
            </svg>
          </WindowButton>
        </WindowButtons>
      </TitleBar>
      <MenuBar>{menus.map((m) => <MenuItem key={m} type="button">{m}</MenuItem>)}</MenuBar>
      <Toolbar>
        {toolbar.map((t, i) => {
          if (t === '|') return <Grip key={i} />;
          if (t === 'v' || t === '-v') return <DropArrow key={i} $off={t === '-v'} type="button" aria-label="More" />;
          const name = t.replace('+', '');
          return (
            <ToolButton key={i} $on={t.startsWith('+')} type="button" aria-label={name}><Icon name={name} /></ToolButton>
          );
        })}
      </Toolbar>
      <FilterBar>
        <LightCell><Icon name="light" /></LightCell>
        <FilterBox>
          <FilterSelect aria-label="Filter" defaultValue="smart"><option value="smart">智能</option></FilterSelect>
        </FilterBox>
      </FilterBar>
      <Body>
        <Navigator>
          <NavMain>
            <Tabs>
              <Tab $active $z={3} type="button" aria-label="Model tree"><Icon name="treetab" /></Tab>
              <Tab $z={2} type="button" aria-label="Folders"><Icon name="folders" /></Tab>
              <Tab $z={1} type="button" aria-label="Favorites"><Icon name="favs" /></Tab>
            </Tabs>
            <Panel>
              <PanelHead>
                <PanelTitle>模型树</PanelTitle>
                <HeadTool>
                  <button type="button" aria-label="Tools"><Icon name="tools" /></button>
                  <HeadArrow type="button" aria-label="Tools menu" />
                </HeadTool>
                <HeadTool>
                  <button type="button" aria-label="Settings"><Icon name="settings" /></button>
                  <HeadArrow type="button" aria-label="Settings menu" />
                </HeadTool>
              </PanelHead>
              <TreeBox>
                <ul>
                  <Row $root><Icon name="part" size={15} />PRT0020.PRT</Row>
                  {tree.map(([icon, label, open]) => (
                    <Row key={label}>
                      <Branch>{open && <Expander type="button" aria-label={'Expand ' + label} />}</Branch>
                      <Icon name={icon} size={16} />
                      {label}
                    </Row>
                  ))}
                </ul>
                <ScrollBar>
                  <ScrollArrow type="button" aria-label="Up" />
                  <ScrollThumb />
                  <ScrollTrack />
                  <ScrollArrow $down type="button" aria-label="Down" />
                </ScrollBar>
              </TreeBox>
            </Panel>
          </NavMain>
          <Rail>
            <RailHandle type="button" aria-label="Show browser" />
            <RailHandle $dark type="button" aria-label="Hide navigator" />
          </Rail>
        </Navigator>
        <Viewport><Stool /></Viewport>
        <FeatureBar>
          <FeatureTools items={datumColumn} />
          <FeatureTools items={shapeColumn} />
        </FeatureBar>
      </Body>
      <StatusEdge />
    </Shell>
  );
}
